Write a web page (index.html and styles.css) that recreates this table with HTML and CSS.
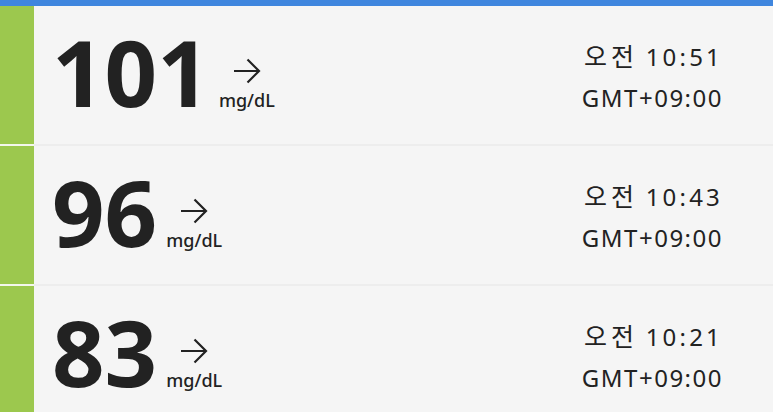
FILE: index.html
```html
<!DOCTYPE html>
<html lang="ko">
<head>
  <meta charset="UTF-8" />
  <meta name="viewport" content="width=device-width, initial-scale=1" />
  <title>혈당 기록</title>
  <link rel="stylesheet" href="styles.css">
</head>
<body>
  <div class="topbar"></div>

  <!-- Lista de leituras -->
  <ul class="leituras">
    <li class="leitura">
      <div class="faixa"></div>
      <div class="corpo">
        <div class="valor">101<span class="unidade"><svg class="seta" width="28" height="26" viewBox="0 0 28 26"><path d="M1 13H26M14.5 1.5L26 13L14.5 24.5" fill="none" stroke="#222" stroke-width="2.2"/></svg>mg/dL</span></div>
        <div class="hora">
          <p><span class="periodo">오전</span> <span class="relogio">10:51</span></p>
          <p>GMT+09:00</p>
        </div>
      </div>
    </li>
    <li class="leitura">
      <div class="faixa"></div>
      <div class="corpo">
        <div class="valor">96<span class="unidade"><svg class="seta" width="28" height="26" viewBox="0 0 28 26"><path d="M1 13H26M14.5 1.5L26 13L14.5 24.5" fill="none" stroke="#222" stroke-width="2.2"/></svg>mg/dL</span></div>
        <div class="hora">
          <p><span class="periodo">오전</span> <span class="relogio">10:43</span></p>
          <p>GMT+09:00</p>
        </div>
      </div>
    </li>
    <li class="leitura">
      <div class="faixa"></div>
      <div class="corpo">
        <div class="valor">83<span class="unidade"><svg class="seta" width="28" height="26" viewBox="0 0 28 26"><path d="M1 13H26M14.5 1.5L26 13L14.5 24.5" fill="none" stroke="#222" stroke-width="2.2"/></svg>mg/dL</span></div>
        <div class="hora">
          <p><span class="periodo">오전</span> <span class="relogio">10:21</span></p>
          <p>GMT+09:00</p>
        </div>
      </div>
    </li>
  </ul>
</body>
</html>
```

FILE: styles.css
```css
* {
  margin: 0;
  padding: 0;
  box-sizing: border-box;
}
body {
  font-family: "Noto Sans", "Noto Sans CJK KR", sans-serif;
  background: #f5f5f5;
  color: #222;
  height: 412px;
  overflow: hidden;
}
.topbar {
  height: 6px;
  background: #3f86de;
}
.leituras {
  list-style: none;
}
.leitura {
  display: flex;
  height: 140px;
}
.faixa {
  width: 34px;
  flex-shrink: 0;
  background: #9cc84e;
  border-bottom: 2px solid #f3f7ec;
}
.corpo {
  flex: 1;
  display: flex;
  justify-content: space-between;
  align-items: flex-start;
  padding: 20px 50px 0 18px;
  border-bottom: 2px solid #ededed;
}
.valor {
  font-size: 92px;
  font-weight: 700;
  line-height: 1;
}
.unidade {
  display: inline-block;
  margin-left: 9px;
  font-size: 18px;
  font-weight: 500;
  line-height: 1.2;
  text-align: center;
}
.seta {
  display: block;
  margin: 0 auto 6px;
}
.hora {
  padding-top: 10px;
  font-size: 24px;
  line-height: 41px;
  letter-spacing: 1.5px;
  text-align: right;
}
.periodo {
  font-size: 25px;
  letter-spacing: 4px;
}
.relogio {
  letter-spacing: 3.2px;
}
```
